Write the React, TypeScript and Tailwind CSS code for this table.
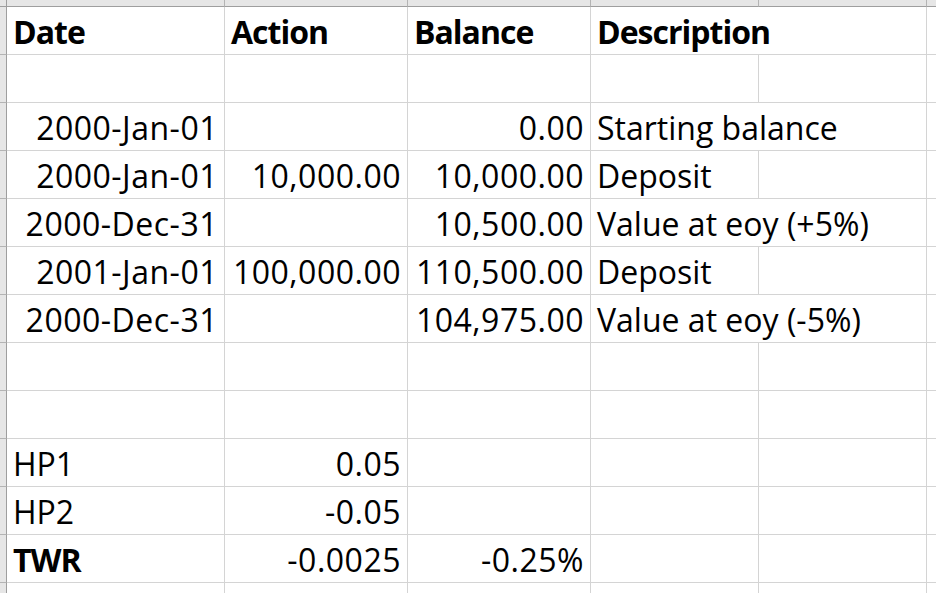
import React from "react";

type Row = {
  a?: string;
  b?: string;
  c?: string;
  d?: string;
  head?: boolean;
  label?: boolean;
  boldA?: boolean;
  wide?: boolean;
};

const rows: Row[] = [
  { a: "Date", b: "Action", c: "Balance", d: "Description", head: true, wide: true },
  {},
  { a: "2000-Jan-01", c: "0.00", d: "Starting balance", wide: true },
  { a: "2000-Jan-01", b: "10,000.00", c: "10,000.00", d: "Deposit" },
  { a: "2000-Dec-31", c: "10,500.00", d: "Value at eoy (+5%)", wide: true },
  { a: "2001-Jan-01", b: "100,000.00", c: "110,500.00", d: "Deposit" },
  { a: "2000-Dec-31", c: "104,975.00", d: "Value at eoy (-5%)", wide: true },
  {},
  {},
  { a: "HP1", b: "0.05", label: true },
  { a: "HP2", b: "-0.05", label: true },
  { a: "TWR", b: "-0.0025", c: "-0.25%", label: true, boldA: true },
];

const cell = "h-12 border-r border-b border-[#d4d4d4] flex items-end pb-[6px] whitespace-nowrap overflow-visible";
const bold = "font-bold tracking-[-1px]";

function Num({ v }: { v?: string }) {
  return <div className={`${cell} justify-end pr-[6px] tracking-[0.5px]`}>{v}</div>;
}

export default function App() {
  return (
    <div
      className="w-[936px] h-[593px] overflow-hidden bg-white text-black text-[32px] leading-[32px]"
      style={{ fontFamily: "'Open Sans', Lato, sans-serif" }}
    >
      <div className="grid grid-cols-[7px_218px_183px_183px_168px_168px_1fr]">
        {/* column header strip */}
        <div className="h-[7px] bg-[#e6e6e6] border-r border-b border-[#9e9e9e]" />
        <div className="h-[7px] bg-[#e6e6e6] border-r border-b border-r-[#b4b4b4] border-b-[#9e9e9e]" />
        <div className="h-[7px] bg-[#e6e6e6] border-r border-b border-r-[#b4b4b4] border-b-[#9e9e9e]" />
        <div className="h-[7px] bg-[#e6e6e6] border-r border-b border-r-[#b4b4b4] border-b-[#9e9e9e]" />
        <div className="h-[7px] bg-[#e6e6e6] border-r border-b border-r-[#b4b4b4] border-b-[#9e9e9e]" />
        <div className="h-[7px] bg-[#e6e6e6] border-r border-b border-r-[#b4b4b4] border-b-[#9e9e9e]" />
        <div className="h-[7px] bg-[#e6e6e6] border-b border-[#9e9e9e]" />

        {rows.map((r, i) => (
          <React.Fragment key={i}>
            <div className="h-12 bg-[#e6e6e6] border-r border-b border-r-[#9e9e9e] border-b-[#b4b4b4]" />
            {r.head || r.label ? (
              <div className={`${cell} pl-[6px] ${r.head || r.boldA ? bold : ""}`}>{r.a}</div>
            ) : (
              <Num v={r.a} />
            )}
            {r.head ? <div className={`${cell} pl-[6px] ${bold}`}>{r.b}</div> : <Num v={r.b} />}
            {r.head ? <div className={`${cell} pl-[6px] ${bold}`}>{r.c}</div> : <Num v={r.c} />}
            {r.wide ? (
              <div className={`${cell} col-span-2 pl-[6px] ${r.head ? bold : ""}`}>{r.d}</div>
            ) : (
              <>
                <div className={`${cell} pl-[6px]`}>{r.d}</div>
                <div className={cell} />
              </>
            )}
            <div className="h-12 border-b border-[#d4d4d4]" />
          </React.Fragment>
        ))}

        <div className="h-3 bg-[#e6e6e6] border-r border-[#9e9e9e]" />
        <div className="h-3 border-r border-[#d4d4d4]" />
        <div className="h-3 border-r border-[#d4d4d4]" />
        <div className="h-3 border-r border-[#d4d4d4]" />
        <div className="h-3 border-r border-[#d4d4d4]" />
        <div className="h-3 border-r border-[#d4d4d4]" />
        <div className="h-3" />
      </div>
    </div>
  );
}
